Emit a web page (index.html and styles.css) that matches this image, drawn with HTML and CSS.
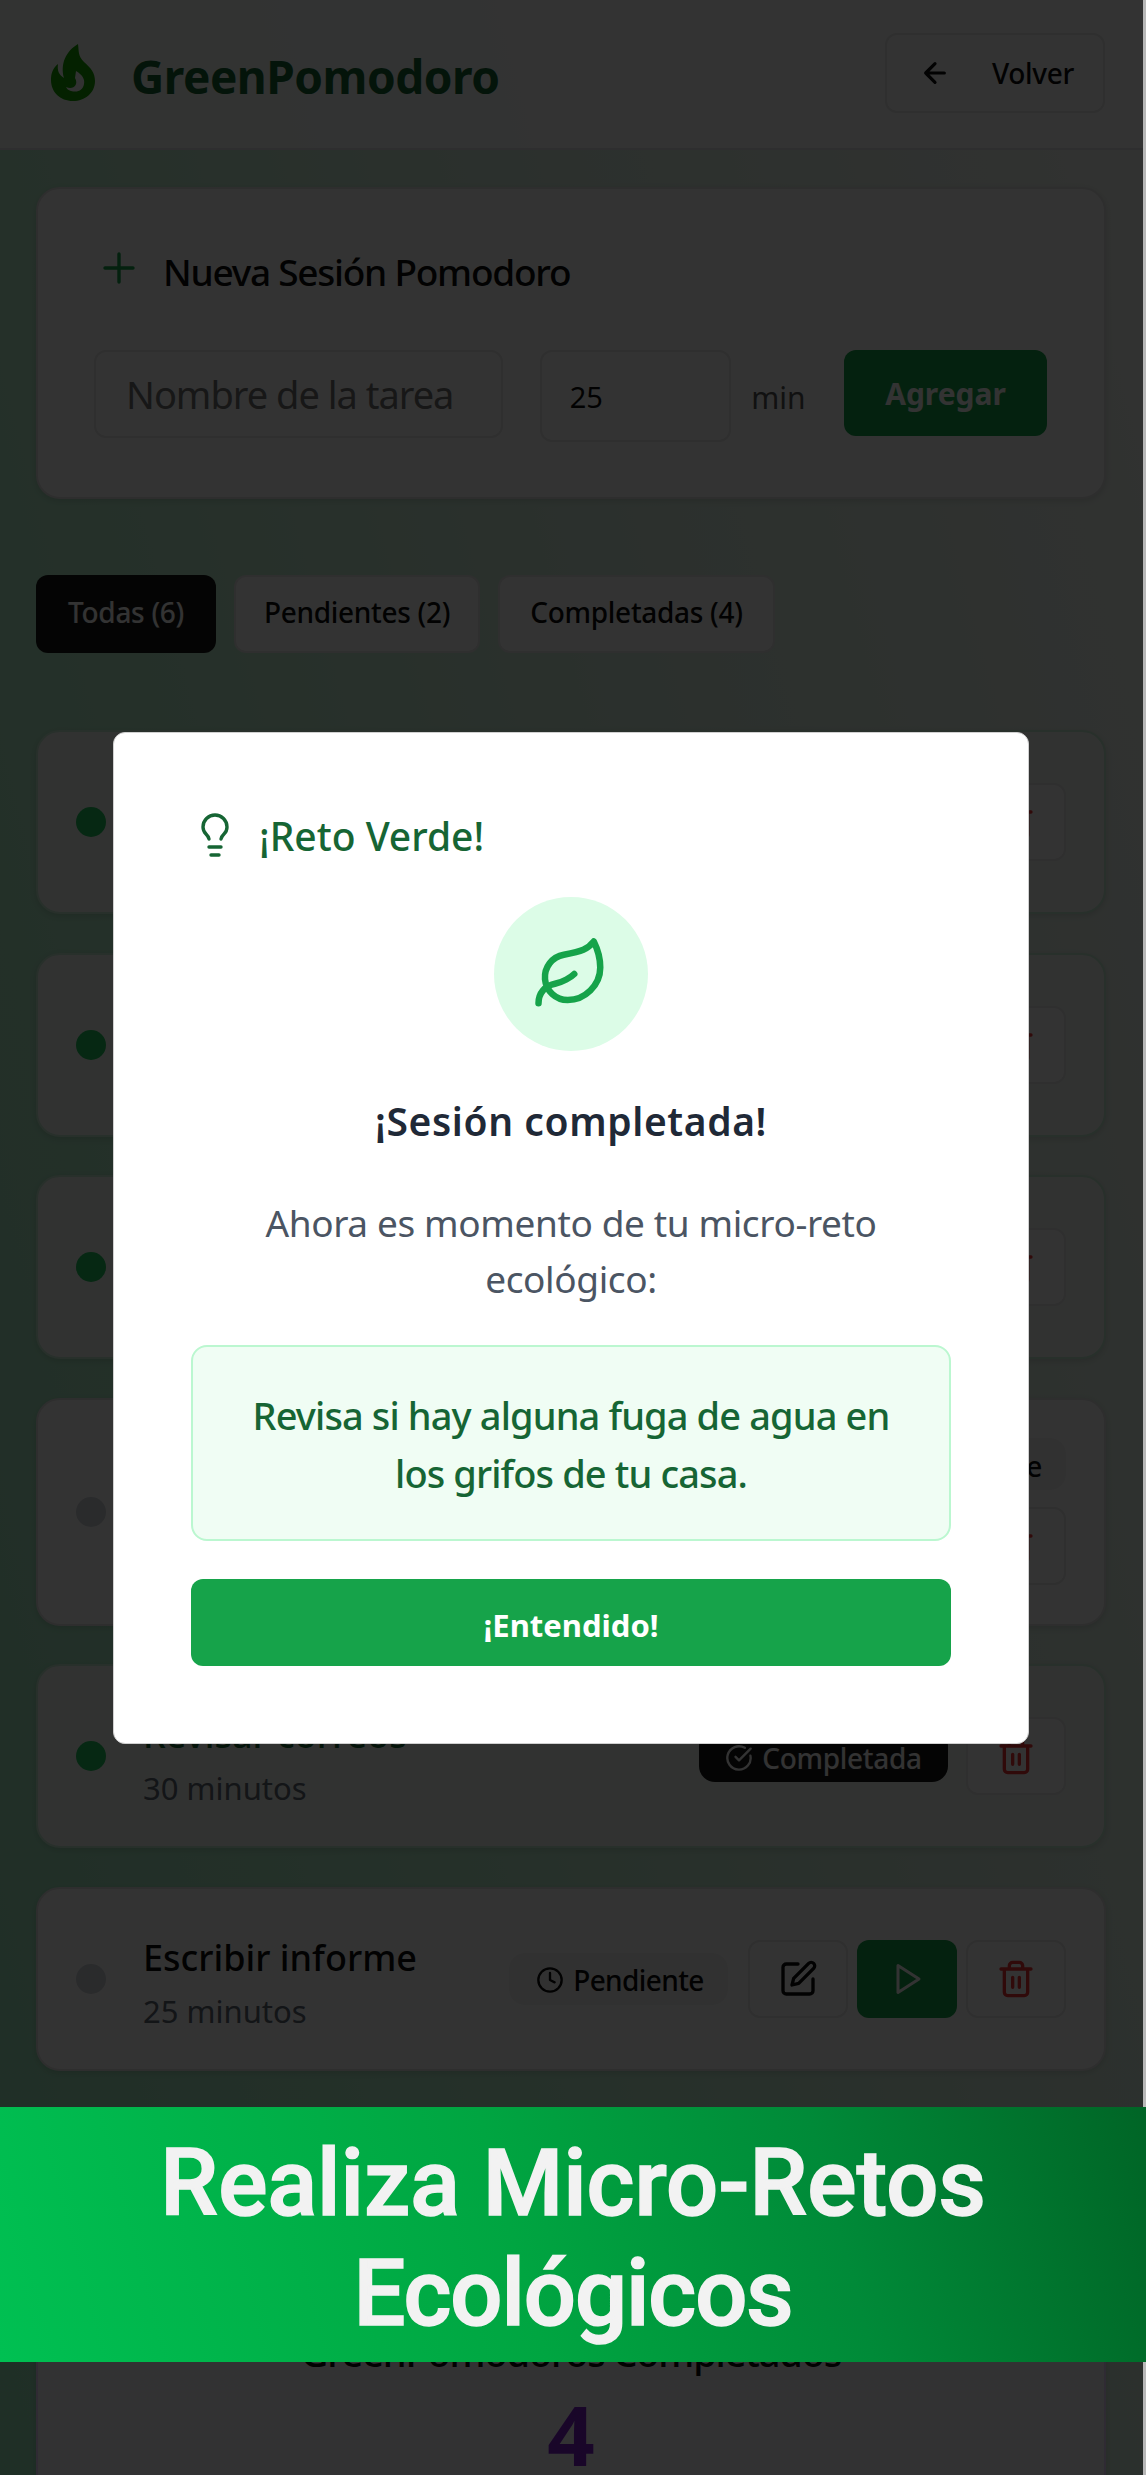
FILE: index.html
```html
<!DOCTYPE html>
<html lang="es">
<head>
<meta charset="utf-8">
<title>GreenPomodoro</title>
<link rel="stylesheet" href="styles.css">
</head>
<body>
<svg class="sprite" aria-hidden="true">
  <symbol id="trash" viewBox="0 0 24 24"><path d="M3 6h18M19 6v14a2 2 0 0 1-2 2H7a2 2 0 0 1-2-2V6M8 6V4a2 2 0 0 1 2-2h4a2 2 0 0 1 2 2v2M10 11v6M14 11v6"/></symbol>
  <symbol id="edit" viewBox="0 0 24 24"><path d="M12 3H5a2 2 0 0 0-2 2v14a2 2 0 0 0 2 2h14a2 2 0 0 0 2-2v-7"/><path d="M18.4 2.6a2.1 2.1 0 0 1 3 3L12.4 14.6l-4 1 1-4z"/></symbol>
  <symbol id="play" viewBox="0 0 24 24"><path d="M6 3l14 9-14 9z"/></symbol>
  <symbol id="clock" viewBox="0 0 24 24"><circle cx="12" cy="12" r="10"/><path d="M12 6v6l4 2"/></symbol>
  <symbol id="check" viewBox="0 0 24 24"><path d="M21.8 10A10 10 0 1 1 17 3.3"/><path d="m9 11 3 3L22 4"/></symbol>
</svg>
<div class="page">
  <header class="topbar">
    <div class="brand">
      <svg class="flame" viewBox="0 0 44 58"><path d="M27 0C28 8 27 12 33 18C40 24 44 29 44 37C44 49 34 57 22 57C9 57 0 48 0 36C0 29 2 24 7 20C6 27 8 31 13 34C9 20 15 7 27 0Z"/><path class="flame-core" d="M25 27C32 31 34 36 33 40C32 46 27 49 20 47C17 46 16 45 15 43C22 46 28 41 24 34Z"/></svg>
      <span class="brand-name">GreenPomodoro</span>
    </div>
    <button class="btn back"><svg class="icon" viewBox="0 0 24 24"><path d="m12 19-7-7 7-7M19 12H5"/></svg><span>Volver</span></button>
  </header>
  <main class="content">
    <section class="card form-card">
      <h2 class="form-title"><svg class="icon plus" viewBox="0 0 24 24"><path d="M5 12h14M12 5v14"/></svg><span>Nueva Sesión Pomodoro</span></h2>
      <div class="form-row">
        <div class="field name-field"><span>Nombre de la tarea</span></div>
        <div class="field min-field"><span>25</span></div>
        <span class="unit">min</span>
        <button class="btn add"><span>Agregar</span></button>
      </div>
    </section>
    <nav class="tabs">
      <button class="btn tab active"><span>Todas (6)</span></button>
      <button class="btn tab pend"><span>Pendientes (2)</span></button>
      <button class="btn tab comp"><span>Completadas (4)</span></button>
    </nav>
    <div class="list">
      <article class="card task done"><i class="dot"></i><span class="btn square del"><svg class="icon"><use href="#trash"/></svg></span></article>
      <article class="card task done"><i class="dot"></i><span class="btn square del"><svg class="icon"><use href="#trash"/></svg></span></article>
      <article class="card task done"><i class="dot"></i><span class="btn square del"><svg class="icon"><use href="#trash"/></svg></span></article>
      <article class="card task tall"><i class="dot"></i><div class="stack"><span class="badge"><svg class="icon"><use href="#clock"/></svg><span>Pendiente</span></span><span class="btn square del"><svg class="icon"><use href="#trash"/></svg></span></div></article>
      <article class="card task done"><i class="dot"></i>
        <div class="info"><h3><span>Revisar correos</span></h3><p><span>30 minutos</span></p></div>
        <span class="badge black"><svg class="icon"><use href="#check"/></svg><span>Completada</span></span>
        <span class="btn square del"><svg class="icon"><use href="#trash"/></svg></span></article>
      <article class="card task"><i class="dot"></i>
        <div class="info"><h3><span>Escribir informe</span></h3><p><span>25 minutos</span></p></div>
        <span class="badge"><svg class="icon"><use href="#clock"/></svg><span>Pendiente</span></span>
        <span class="btn square edit"><svg class="icon"><use href="#edit"/></svg></span>
        <span class="btn square play"><svg class="icon"><use href="#play"/></svg></span>
        <span class="btn square del"><svg class="icon"><use href="#trash"/></svg></span></article>
    </div>
    <section class="card stats"><h3><span>GreenPomodoros Completados</span></h3><strong>4</strong></section>
  </main>
</div>
<div class="overlay"></div>
<div class="modal">
  <h2 class="modal-title"><svg class="icon bulb" viewBox="0 0 24 24"><path d="M15 14c.2-1 .7-1.700 1.500-2.500 1-.9 1.500-2.200 1.500-3.500A6 6 0 0 0 6 8c0 1 .2 2.200 1.500 3.500.7.7 1.300 1.500 1.500 2.500M9 18h6M10 22h4"/></svg><span>¡Reto Verde!</span></h2>
  <div class="leaf"><svg class="icon" viewBox="0 0 24 24"><path d="M11 20A7 7 0 0 1 9.800 6.100C15.500 5 17 4.480 19 2c1 2 2 4.180 2 8 0 5.500-4.780 10-10 10Z"/><path d="M2 21c0-3 1.850-5.360 5.080-6C9.500 14.520 12 13 13 12"/></svg></div>
  <h3 class="done-title"><span>¡Sesión completada!</span></h3>
  <p class="lead"><span>Ahora es momento de tu micro-reto</span><br><span>ecológico:</span></p>
  <div class="challenge"><span>Revisa si hay alguna fuga de agua en</span><br><span>los grifos de tu casa.</span></div>
  <button class="btn ok"><span>¡Entendido!</span></button>
</div>
<div class="edge"></div>
<div class="banner"><span class="line1">Realiza Micro-Retos</span><span class="line2">Ecológicos</span></div>
</body>
</html>
```
FILE: styles.css
```css
* { box-sizing: border-box; }
body { margin: 0; width: 1146px; height: 2475px; overflow: hidden; position: relative; font-family: "Noto Sans", sans-serif; color: #0a0a0a; }
h2, h3, p { margin: 0; font-weight: 500; }
.sprite { position: absolute; width: 0; height: 0; }
.page { height: 2475px; overflow: hidden; background: linear-gradient(75deg, #9be8be 0%, #bcf0cf 37%, #d8f0e0 63%, #f8faf6 100%); }
.icon { width: 32px; height: 32px; fill: none; stroke: currentColor; stroke-width: 2; stroke-linecap: round; stroke-linejoin: round; flex: none; }
.topbar { height: 150px; padding: 0 41px 2px 51px; background: rgba(255,255,255,.9); border-bottom: 2px solid #e5e7eb; display: flex; align-items: center; justify-content: space-between; }
.brand { display: flex; align-items: center; gap: 36px; }
.flame { width: 44px; height: 58px; fill: #16a300; }
.flame .flame-core { fill: #fafafa; }
.brand-name { font-size: 46px; font-weight: 700; color: #166534; letter-spacing: -.5px; white-space: nowrap; padding-top: 5px; }
.btn { display: flex; align-items: center; justify-content: center; font: 500 28px "Noto Sans", sans-serif; border: 2px solid #e8e8e8; border-radius: 12px; background: #fff; padding: 0; color: #0a0a0a; white-space: nowrap; flex: none; }
.back { width: 220px; height: 80px; gap: 41px; padding-left: 3px; letter-spacing: -.3px; }
.back .icon { stroke-width: 2.4; }
.content { padding: 37px 40px 0 36px; }
.card { background: #fff; border: 2px solid #e5e5e5; border-radius: 24px; box-shadow: 0 2px 6px rgba(0,0,0,.12); }
.form-card { height: 312px; padding: 59px 57px 0 56px; }
.form-title { display: flex; align-items: center; gap: 20px; font-size: 37px; letter-spacing: -1.25px; height: 46px; white-space: nowrap; }
.plus { width: 48px; height: 48px; color: #16a34a; stroke-width: 1.7; margin: -6px 0 0 1px; }
.form-row { display: flex; align-items: flex-start; margin-top: 56px; }
.field { border: 2px solid #e8e8e8; border-radius: 12px; height: 88px; display: flex; align-items: center; white-space: nowrap; }
.name-field { width: 410px; padding-left: 30px; font-size: 38px; letter-spacing: -1px; color: #737373; }
.min-field { width: 192px; margin-left: 37px; padding-left: 28px; font-size: 29px; height: 92px; }
.unit { width: 58px; margin: 27px 35px 0 20px; font-size: 30px; color: #555; }
.add { width: 203px; height: 86px; background: #16a34a; border: 0; color: #fff; font-weight: 700; font-size: 30px; }
.tabs { display: flex; gap: 18px; margin: 76px 0 77px; }
.tab { height: 78px; padding-bottom: 4px; letter-spacing: -.3px; }
.active { width: 180px; background: #171717; color: #fff; border: 0; }
.pend { width: 246px; }
.comp { width: 277px; }
.list { display: flex; flex-direction: column; gap: 38.7px; }
.task { height: 184px; display: flex; align-items: center; padding: 0 38px; }
.done { background: #f4faf6; border-color: #c7eed4; }
.tall { height: 227.5px; }
.dot { width: 30px; height: 30px; border-radius: 50%; background: #d1d5db; flex: none; }
.done .dot { background: #22c55e; }
.square { width: 100px; height: 78px; }
.task > .square.del, .stack { margin-left: auto; }
.info + .badge { margin-left: auto; }
.badge ~ .square { margin-left: 9px !important; }
.badge.black ~ .square { margin-left: 18px !important; }
.badge + .edit { margin-left: 20px !important; }
.del { color: #ef3333; }
.del .icon, .edit .icon { width: 40px; height: 40px; }
.play { background: #16a34a; color: #fff; border: 0; }
.play .icon { width: 36px; height: 36px; }
.stack { display: flex; flex-direction: column; gap: 17px; align-items: flex-end; }
.stack .square { margin-left: 0 !important; }
.info { margin-left: 37px; padding-top: 11px; }
.info h3 { font-size: 36px; line-height: 54px; white-space: nowrap; }
.done .info h3 { color: #166534; }
.info p { font-size: 31px; line-height: 53px; color: #606875; font-weight: 400; white-space: nowrap; }
.badge { width: 219px; height: 52px; border-radius: 16px; background: #f5f5f5; display: flex; align-items: center; justify-content: center; gap: 9px; padding: 3px 0 0 3px; font-size: 28px; font-weight: 500; letter-spacing: -.6px; white-space: nowrap; }
.badge .icon { width: 28px; height: 28px; }
.black { width: 249px; background: #171717; color: #fff; padding-left: 0; letter-spacing: -.3px; }
.stats { height: 440px; margin-top: 40px; padding-top: 214px; text-align: center; background: #faf8fc; border-color: #e9d5ff; }
.stats h3 { font-size: 38px; line-height: 50px; letter-spacing: -1.15px; white-space: nowrap; }
.stats strong { display: block; font-size: 83px; line-height: 70px; margin-top: 22px; color: #7e22ce; }
.overlay { position: absolute; inset: 0 3px 0 0; background: rgba(0,0,0,.8); }
.edge { position: absolute; right: 0; top: 0; width: 3px; height: 100%; background: #b8b8b8; }
.modal { position: absolute; left: 113px; top: 732px; width: 916px; height: 1012px; background: #fff; border: 1px solid #d0d0d0; border-radius: 12px; padding: 77px 77px 0; text-align: center; display: flex; flex-direction: column; }
.modal-title { display: flex; align-items: center; gap: 20px; height: 50px; font-size: 39px; color: #166534; white-space: nowrap; }
.bulb { width: 48px; height: 48px; stroke-width: 1.7; }
.leaf { width: 154px; height: 154px; margin: 37px auto 0; border-radius: 50%; background: #dcfce7; color: #16a34a; display: grid; place-items: center; }
.leaf .icon { width: 78px; height: 78px; margin: -1px 1px 0 0; }
.done-title { font-size: 39px; line-height: 54px; margin-top: 43px; color: #1f2937; font-weight: 600; letter-spacing: .6px; }
.lead { font-size: 37px; line-height: 56px; margin-top: 47px; color: #4b5563; font-weight: 400; letter-spacing: -.38px; white-space: nowrap; }
.challenge { height: 196px; margin-top: 38px; padding-top: 39px; background: #f0fdf4; border: 2px solid #bbf7d0; border-radius: 16px; font-size: 38px; font-weight: 500; line-height: 58px; letter-spacing: -.88px; color: #166534; white-space: nowrap; }
.ok { height: 87px; margin-top: 38px; padding-top: 4px; background: #16a34a; color: #fff; border: 0; font-weight: 700; font-size: 31px; }
.banner { position: absolute; left: 0; top: 2107px; width: 1146px; height: 255px; background: linear-gradient(75deg, #00c052 0%, #00a541 45%, #008a38 72%, #006526 100%); color: #f2f2f2; display: flex; flex-direction: column; align-items: center; font: 500 92px/110px Roboto, sans-serif; -webkit-text-stroke: 1.5px #f2f2f2; padding-top: 22px; white-space: nowrap; }
.line2 { letter-spacing: -1.1px; }
```
